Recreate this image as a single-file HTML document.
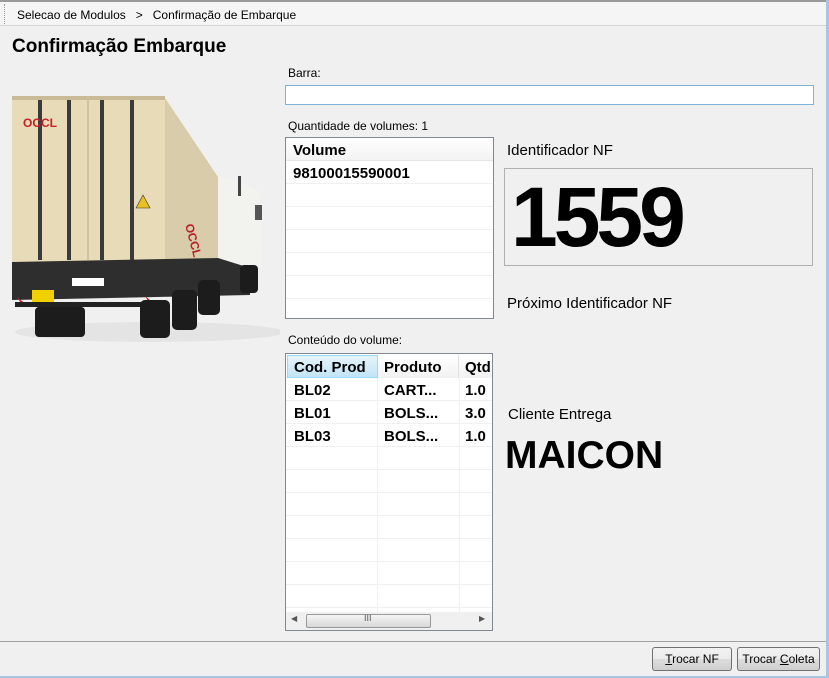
<!DOCTYPE html>
<html><head><meta charset="utf-8"><style>
*{margin:0;padding:0;box-sizing:border-box}
body{width:829px;height:678px;background:#f0f0f0;font-family:"Liberation Sans",sans-serif;position:relative;overflow:hidden;color:#000}
.a{position:absolute}
.s{font-size:12px}
.grid{background:#fff;border:1px solid #828790}
.row{position:absolute;left:0;height:23px;border-bottom:1px solid #f0f0f0;width:100%}
.b{font-weight:bold;font-size:16px}
.btn{position:absolute;height:24px;border:1px solid #707070;border-radius:3px;background:linear-gradient(#f2f2f2,#ebebeb 50%,#dddddd 51%,#cfcfcf);font-size:12px;text-align:center;line-height:22px}
</style></head><body>
<div class="a" style="left:0;top:0;width:829px;height:2px;background:#9a9a9a"></div>
<div class="a" style="left:0;top:2px;width:829px;height:24px;background:#f5f5f5;border-bottom:1px solid #d5d5d5"></div>
<div class="a" style="left:4px;top:4px;width:2px;height:20px;border-left:1px dotted #999"></div>
<div class="a s" style="left:17px;top:8px">Selecao de Modulos &nbsp;&nbsp;&gt;&nbsp;&nbsp; Confirmação de Embarque</div>
<div class="a" style="left:12px;top:36px;font-size:19px;font-weight:bold">Confirmação Embarque</div>

<svg class="a" style="left:0;top:85px" width="280" height="265" viewBox="0 85 280 265">
<ellipse cx="150" cy="332" rx="135" ry="10" fill="#e4e4e4"/>
<polygon points="165,98 218,177 218,258 165,262" fill="#d9ccaa"/>
<polygon points="218,177 235,180 260,192 262,268 218,270" fill="#f2f2ef"/>
<rect x="238" y="176" width="3" height="20" fill="#444"/>
<rect x="255" y="205" width="7" height="15" fill="#555"/>
<rect x="12" y="96" width="153" height="166" fill="#e8dcb8"/>
<rect x="12" y="96" width="153" height="4" fill="#c9bb95"/>
<g fill="#3a3a3a"><rect x="38" y="100" width="4" height="160"/><rect x="67" y="100" width="4" height="160"/><rect x="100" y="100" width="4" height="160"/><rect x="130" y="100" width="4" height="160"/></g>
<line x1="88" y1="100" x2="88" y2="260" stroke="#b8aa85"/>
<text x="23" y="127" fill="#c8202a" font-weight="bold" font-size="12" font-family="Liberation Sans">OCCL</text>
<text x="185" y="225" fill="#b82028" font-weight="bold" font-size="12" font-family="Liberation Sans" transform="rotate(75 185 225)">OCCL</text>
<polygon points="143,195 136,208 150,208" fill="#e8c020" stroke="#333" stroke-width=".6"/>
<polygon points="12,262 218,258 250,268 250,295 12,300" fill="#2e2e2e"/>
<rect x="72" y="278" width="32" height="8" fill="#fff"/>
<rect x="32" y="290" width="22" height="14" fill="#f0d000"/>
<polygon points="22,305 17,297 27,305" fill="#cc2020"/>
<polygon points="150,304 145,296 155,304" fill="#cc2020"/>
<rect x="15" y="302" width="145" height="5" fill="#222"/>
<g fill="#1c1c1c"><rect x="35" y="307" width="50" height="30" rx="4"/><rect x="140" y="300" width="30" height="38" rx="5"/><rect x="172" y="290" width="25" height="40" rx="5"/><rect x="198" y="280" width="22" height="35" rx="5"/><rect x="240" y="265" width="18" height="28" rx="4"/></g>
</svg>

<div class="a s" style="left:288px;top:66px">Barra:</div>
<div class="a" style="left:285px;top:85px;width:529px;height:20px;background:#fff;border:1px solid #7eb4d8"></div>

<div class="a s" style="left:288px;top:119px">Quantidade de volumes: 1</div>
<div class="a grid" style="left:285px;top:137px;width:209px;height:182px">
<div class="row" style="top:0;height:23px;background:linear-gradient(#fff,#f3f3f3);border-bottom:1px solid #e5e5e5"><span class="a b" style="left:7px;top:4px;font-size:15px">Volume</span></div>
<div class="row" style="top:23px"><span class="a b" style="left:7px;top:4px;font-size:15px">98100015590001</span></div>
<div class="row" style="top:46px"></div><div class="row" style="top:69px"></div><div class="row" style="top:92px"></div><div class="row" style="top:115px"></div><div class="row" style="top:138px"></div>
</div>

<div class="a" style="left:507px;top:142px;font-size:15px">Identificador NF</div>
<div class="a" style="left:504px;top:168px;width:309px;height:98px;border:1px solid #b0b0b0;background:#f0f0f0"></div>
<div class="a" style="left:511px;top:172px;font-size:84px;font-weight:bold;letter-spacing:-4px;line-height:90px">1559</div>
<div class="a" style="left:507px;top:295px;font-size:15px">Próximo Identificador NF</div>

<div class="a s" style="left:288px;top:333px">Conteúdo do volume:</div>
<div class="a grid" style="left:285px;top:353px;width:208px;height:278px;overflow:hidden">
<div class="row" style="top:1px;height:23px;background:#fff"></div>
<div class="a" style="left:1px;top:1px;width:91px;height:23px;background:linear-gradient(#e6f4fc,#c2e4f6);border:1px solid #96d9f9"></div>
<div class="a" style="left:92px;top:1px;width:81px;height:23px;background:linear-gradient(#fff,#f2f2f2);border-right:1px solid #e0e0e0"></div>
<div class="a" style="left:173px;top:1px;width:40px;height:23px;background:linear-gradient(#fff,#f2f2f2)"></div>
<span class="a b" style="left:8px;top:5px;font-size:15px">Cod. Prod</span><span class="a b" style="left:98px;top:5px;font-size:15px">Produto</span><span class="a b" style="left:179px;top:5px;font-size:15px">Qtd</span>
<div class="a" style="left:91px;top:24px;width:1px;height:235px;background:#f0f0f0"></div>
<div class="a" style="left:173px;top:24px;width:1px;height:235px;background:#f0f0f0"></div>
<div class="row" style="top:24px"></div><div class="row" style="top:47px"></div><div class="row" style="top:70px"></div><div class="row" style="top:93px"></div><div class="row" style="top:116px"></div><div class="row" style="top:139px"></div><div class="row" style="top:162px"></div><div class="row" style="top:185px"></div><div class="row" style="top:208px"></div><div class="row" style="top:231px"></div>
<span class="a b" style="left:8px;top:28px;font-size:15px">BL02</span><span class="a b" style="left:98px;top:28px;font-size:15px">CART...</span><span class="a b" style="left:179px;top:28px;font-size:15px">1.0</span>
<span class="a b" style="left:8px;top:51px;font-size:15px">BL01</span><span class="a b" style="left:98px;top:51px;font-size:15px">BOLS...</span><span class="a b" style="left:179px;top:51px;font-size:15px">3.0</span>
<span class="a b" style="left:8px;top:74px;font-size:15px">BL03</span><span class="a b" style="left:98px;top:74px;font-size:15px">BOLS...</span><span class="a b" style="left:179px;top:74px;font-size:15px">1.0</span>
<div class="a" style="left:0;top:258px;width:206px;height:18px;background:#f0f0f0"></div>
<div class="a" style="left:20px;top:260px;width:125px;height:14px;border:1px solid #999;border-radius:2px;background:linear-gradient(#f4f4f4,#d8d8d8)"></div>
<span class="a" style="left:78px;top:259px;font-size:9px;color:#555">III</span>
<span class="a" style="left:5px;top:260px;font-size:8px;color:#555">◀</span>
<span class="a" style="left:193px;top:260px;font-size:8px;color:#555">▶</span>
</div>

<div class="a" style="left:508px;top:406px;font-size:15px">Cliente Entrega</div>
<div class="a" style="left:505px;top:434px;font-size:39px;font-weight:bold">MAICON</div>

<div class="a" style="left:0;top:641px;width:826px;height:1px;background:#a0a0a0"></div>
<div class="btn" style="left:652px;top:647px;width:80px"><u>T</u>rocar NF</div>
<div class="btn" style="left:737px;top:647px;width:83px">Trocar <u>C</u>oleta</div>
<div class="a" style="left:826px;top:0;width:3px;height:678px;background:#a9c5e2"></div>
<div class="a" style="left:0;top:676px;width:829px;height:2px;background:#a9c5e2"></div>
</body></html>
